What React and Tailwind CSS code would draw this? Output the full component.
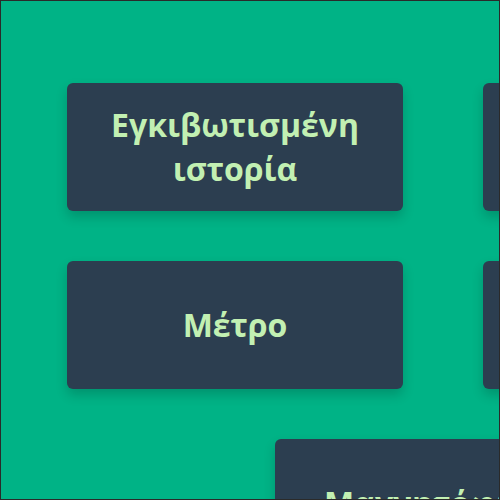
const items = [
  "Εγκιβωτισμένη ιστορία",
  "Ραδιόφωνο",
  "Τηλεόραση",
  "Μέτρο",
  "Κινηματογράφος",
  "Θέατρο",
  "Μαγνητόφωνο",
  "Φωνογράφος",
];

const App = () => {
  return (
    <div className="w-[500px] h-[500px] overflow-hidden border border-[#2a2a2a] bg-[#00b386] font-['Open_Sans','Noto_Sans',sans-serif]">
      <div className="pl-[66px] pt-[82px]">
        {/* card grid, wider than the window */}
        <div className="flex flex-wrap justify-center gap-x-[80px] gap-y-[50px] w-[1168px]">
          {items.map((label) => (
            <div
              key={label}
              className="w-[336px] h-[128px] shrink-0 flex items-center justify-center px-8 rounded-md bg-[#2c3e50] shadow-[0_6px_12px_rgba(0,0,0,0.18)]"
            >
              <span className="text-center text-[32px] leading-[44px] font-bold text-[#c2f0b2]">
                {label}
              </span>
            </div>
          ))}
        </div>
      </div>
    </div>
  );
};

export default App;
